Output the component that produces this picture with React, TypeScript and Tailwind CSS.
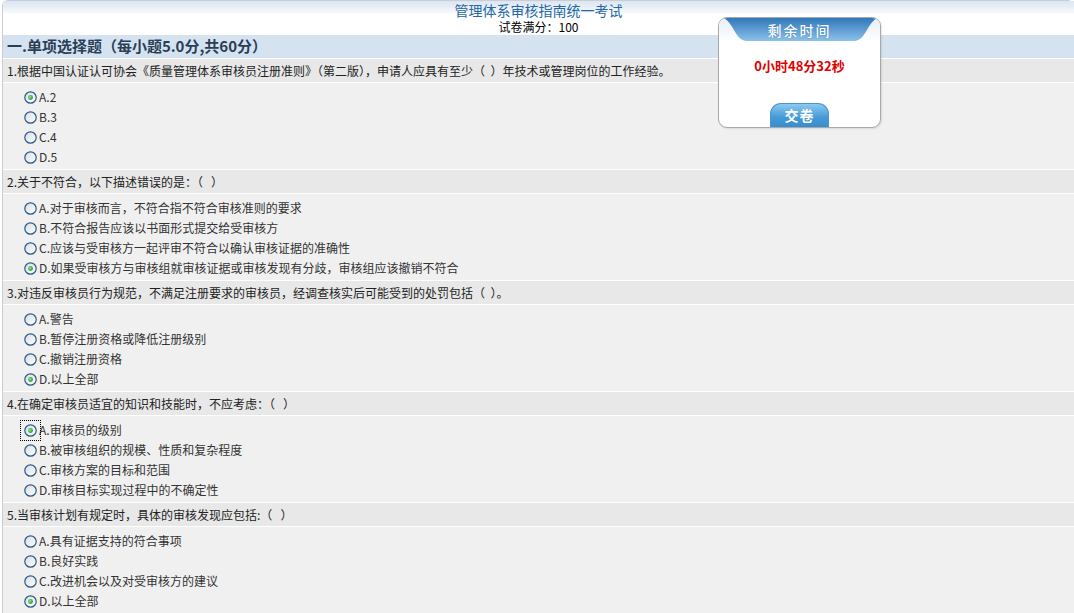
import React from 'react';

interface Question {
  title: string;
  options: string[];
  answer: number;
  focused?: boolean;
}

const questions: Question[] = [
  {
    title: '1.根据中国认证认可协会《质量管理体系审核员注册准则》（第二版），申请人应具有至少（  ）年技术或管理岗位的工作经验。',
    options: ['A.2', 'B.3', 'C.4', 'D.5'],
    answer: 0,
  },
  {
    title: '2.关于不符合，以下描述错误的是：（   ）',
    options: [
      'A.对于审核而言，不符合指不符合审核准则的要求',
      'B.不符合报告应该以书面形式提交给受审核方',
      'C.应该与受审核方一起评审不符合以确认审核证据的准确性',
      'D.如果受审核方与审核组就审核证据或审核发现有分歧，审核组应该撤销不符合',
    ],
    answer: 3,
  },
  {
    title: '3.对违反审核员行为规范，不满足注册要求的审核员，经调查核实后可能受到的处罚包括（  ）。',
    options: ['A.警告', 'B.暂停注册资格或降低注册级别', 'C.撤销注册资格', 'D.以上全部'],
    answer: 3,
  },
  {
    title: '4.在确定审核员适宜的知识和技能时，不应考虑：（   ）',
    options: ['A.审核员的级别', 'B.被审核组织的规模、性质和复杂程度', 'C.审核方案的目标和范围', 'D.审核目标实现过程中的不确定性'],
    answer: 0,
    focused: true,
  },
  {
    title: '5.当审核计划有规定时，具体的审核发现应包括:（   ）',
    options: ['A.具有证据支持的符合事项', 'B.良好实践', 'C.改进机会以及对受审核方的建议', 'D.以上全部'],
    answer: 3,
  },
];

const Radio: React.FC<{ checked: boolean }> = ({ checked }) => (
  <svg width="13" height="13" viewBox="0 0 13 13">
    <defs>
      <linearGradient id="rbg" x1="0" y1="0" x2="1" y2="1">
        <stop offset="0" stopColor="#d6dce4" />
        <stop offset="1" stopColor="#ffffff" />
      </linearGradient>
      <radialGradient id="rdot" cx="0.4" cy="0.4" r="0.6">
        <stop offset="0" stopColor="#9be39b" />
        <stop offset="1" stopColor="#1e9a1e" />
      </radialGradient>
    </defs>
    <circle cx="6.5" cy="6.5" r="5.7" fill="url(#rbg)" stroke="#2b5a86" strokeWidth="1.2" />
    {checked && <circle cx="6.5" cy="6.5" r="2.4" fill="url(#rdot)" />}
  </svg>
);

const Timer: React.FC = () => (
  <div className="absolute left-[718px] top-[17px] w-[163px] h-[111px] rounded-[9px] border border-[#a9a9a9] bg-white overflow-hidden shadow-[1px_1px_2px_rgba(0,0,0,0.1)]">
    <div className="relative h-[24px] bg-[linear-gradient(to_bottom,#e6eef7,#ffffff)]">
      <svg className="absolute left-0 top-0" width="163" height="24" viewBox="0 0 163 24">
        <defs>
          <linearGradient id="tab" x1="0" y1="0" x2="0" y2="1">
            <stop offset="0" stopColor="#2f78b9" />
            <stop offset="1" stopColor="#8cc2ea" />
          </linearGradient>
        </defs>
        <path d="M4,0 H159 C149,3 147,22 136,23 H27 C16,22 14,3 4,0 Z" fill="url(#tab)" />
      </svg>
      <div className="relative text-center text-white text-[14px] leading-[24px] tracking-[2px] font-medium [text-shadow:0_0_1px_#2a6aa0]">
        剩余时间
      </div>
    </div>
    <div className="text-center text-[#e00000] text-[13px] font-bold mt-[14px]">0小时48分32秒</div>
    <div className="absolute left-[51px] bottom-0 w-[59px] h-[24px] rounded-t-[11px] border border-b-0 border-[#4b93cc] bg-[linear-gradient(to_bottom,#8ccaf0,#4398d6_60%,#3a8dcc)] flex items-center justify-center text-white text-[14px] font-bold tracking-[1px]">
      交卷
    </div>
  </div>
);

const App: React.FC = () => {
  return (
    <div className="w-[1074px] h-[613px] overflow-hidden bg-white relative font-['Noto_Sans_CJK_SC',sans-serif]">
      <div className="ml-[2px] border-l border-t border-[#c9ced6] rounded-tl-[6px] rounded-tr-[6px]">
        <div className="h-[34px] bg-[linear-gradient(to_bottom,#dbe5f2_0px,#f6f8fc_12px,#ffffff_13px)] flex flex-col items-center">
          <div className="text-[14px] leading-[17px] mt-[1px] text-[#2467a3]">管理体系审核指南统一考试</div>
          <div className="text-[12px] leading-[13px] mt-[1px] text-black">试卷满分：100</div>
        </div>
        <div className="h-[23px] bg-[#d5e3f1] flex items-center pl-[4px] text-[15px] font-bold text-[#2b3e58]">
          一.单项选择题（每小题5.0分,共60分）
        </div>
        {questions.map((q, qi) => (
          <div key={qi}>
            <div className="border-t border-b border-white h-[25px] bg-[#e8e8e8] flex items-center pl-[4px] text-[12px] text-[#222] whitespace-pre">
              {q.title}
            </div>
            <div className="h-[86px] bg-[#f0f0f0] pt-[4px] pl-[21px]">
              {q.options.map((opt, oi) => (
                <div key={oi} className="h-[20px] flex items-center gap-[2px] text-[12px] text-[#333]">
                  <span className="relative flex">
                    <Radio checked={oi === q.answer} />
                    {q.focused && oi === q.answer && (
                      <span className="absolute -inset-[4px] border border-dotted border-black" />
                    )}
                  </span>
                  <span>{opt}</span>
                </div>
              ))}
            </div>
          </div>
        ))}
      </div>
      <Timer />
    </div>
  );
};

export default App;
